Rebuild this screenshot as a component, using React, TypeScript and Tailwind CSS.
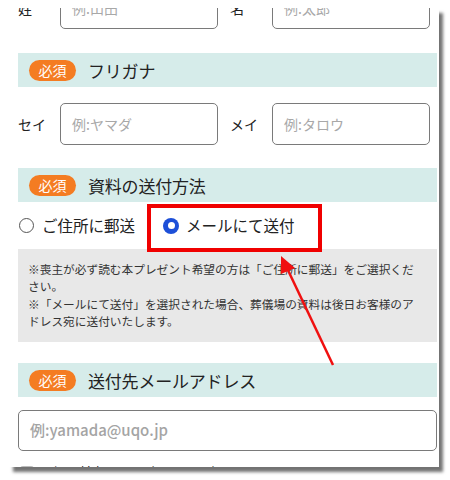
import React from 'react';

const font = { fontFamily: '"Noto Sans CJK JP", "Noto Sans", sans-serif' };

const Badge: React.FC = () => (
  <span className="flex items-center justify-center w-[47px] h-[21px] rounded-full bg-[#f47c22] text-white text-[14px] leading-none">
    必須
  </span>
);

const SectionHeader: React.FC<{ title: string; className?: string }> = ({ title, className }) => (
  <div className={`flex items-center h-[34px] bg-[#d6ecea] pl-[11px] gap-[12px] ${className ?? ''}`}>
    <Badge />
    <span className="text-[17px] text-[#222] leading-none tracking-[-0.2px]">{title}</span>
  </div>
);

const NameField: React.FC<{ label: string; placeholder: string; className?: string }> = ({
  label,
  placeholder,
  className,
}) => (
  <div className={`flex items-center ${className ?? ''}`}>
    <span className="w-[42px] text-[14px] text-[#222]">{label}</span>
    <div className="flex items-center w-[158px] h-[42px] border-[1.5px] border-[#7a7a7a] rounded-[5px] pl-[11px] text-[14px] text-[#a8a8a8]">
      {placeholder}
    </div>
  </div>
);

const NameRow: React.FC<{ first: [string, string]; second: [string, string]; className?: string }> = ({
  first,
  second,
  className,
}) => (
  <div className={`flex items-center ${className ?? ''}`}>
    <NameField label={first[0]} placeholder={first[1]} />
    <NameField label={second[0]} placeholder={second[1]} className="ml-[12px]" />
  </div>
);

export default function App() {
  return (
    <div className="relative w-[450px] h-[480px] bg-white pt-[8px] pl-[9px]" style={font}>
      {/* page card, cropped at top and bottom like the screenshot */}
      <div className="w-[430px] h-[459px] bg-white overflow-hidden shadow-[4px_5px_3px_rgba(0,0,0,0.55)] pl-[9px] pr-[2px]">
        <NameRow first={['姓', '例:山田']} second={['名', '例:太郎']} className="-mt-[21px]" />

        <SectionHeader title="フリガナ" className="mt-[24px]" />
        <NameRow first={['セイ', '例:ヤマダ']} second={['メイ', '例:タロウ']} className="mt-[16px]" />

        <SectionHeader title="資料の送付方法" className="mt-[23px]" />
        <div className="flex items-center h-[47px] pl-[1px]">
          <span className="w-[15px] h-[15px] rounded-full border-[1.5px] border-[#555]" />
          <span className="ml-[8px] text-[15.5px] text-[#222]">ご住所に郵送</span>
          <span className="ml-[28px] flex items-center justify-center w-[16px] h-[16px] rounded-full bg-[#1d4fd8]">
            <span className="w-[7px] h-[7px] rounded-full bg-white" />
          </span>
          <span className="ml-[7px] text-[15.5px] text-[#222]">メールにて送付</span>
        </div>
        <div className="bg-[#e8e8e8] pl-[10px] pr-[14px] pt-[11px] pb-[12px] h-[93px] text-[11.7px] leading-[17.3px] text-[#333]">
          <p>※喪主が必ず読む本プレゼント希望の方は「ご住所に郵送」をご選択ください。</p>
          <p>※「メールにて送付」を選択された場合、葬儀場の資料は後日お客様のアドレス宛に送付いたします。</p>
        </div>

        <SectionHeader title="送付先メールアドレス" className="mt-[21px]" />
        <div className="mt-[13px] flex items-center h-[41px] border-[1.5px] border-[#7a7a7a] rounded-[5px] pl-[11px] text-[15px] font-medium text-[#a4a4a4]">
          例:yamada@uqo.jp
        </div>
        <div className="mt-[11px] flex items-center gap-[18px] pl-[2px]">
          <span className="w-[14px] h-[14px] rounded-[3px] bg-[#bbb]" />
          <span className="text-[14px] text-[#222]">個人情報の取り扱いに同意する</span>
        </div>
      </div>

      {/* annotation box */}
      <div className="absolute left-[147px] top-[204px] w-[175px] h-[48px] border-[4px] border-[#f00000]" />

      {/* annotation arrow */}
      <svg className="absolute inset-0 pointer-events-none" width="450" height="480" viewBox="0 0 450 480">
        <line x1="333" y1="365" x2="286" y2="266" stroke="#f01010" strokeWidth="2.5" />
        <polygon points="281,256 295,268 281,274" fill="#f01010" />
      </svg>
    </div>
  );
}
